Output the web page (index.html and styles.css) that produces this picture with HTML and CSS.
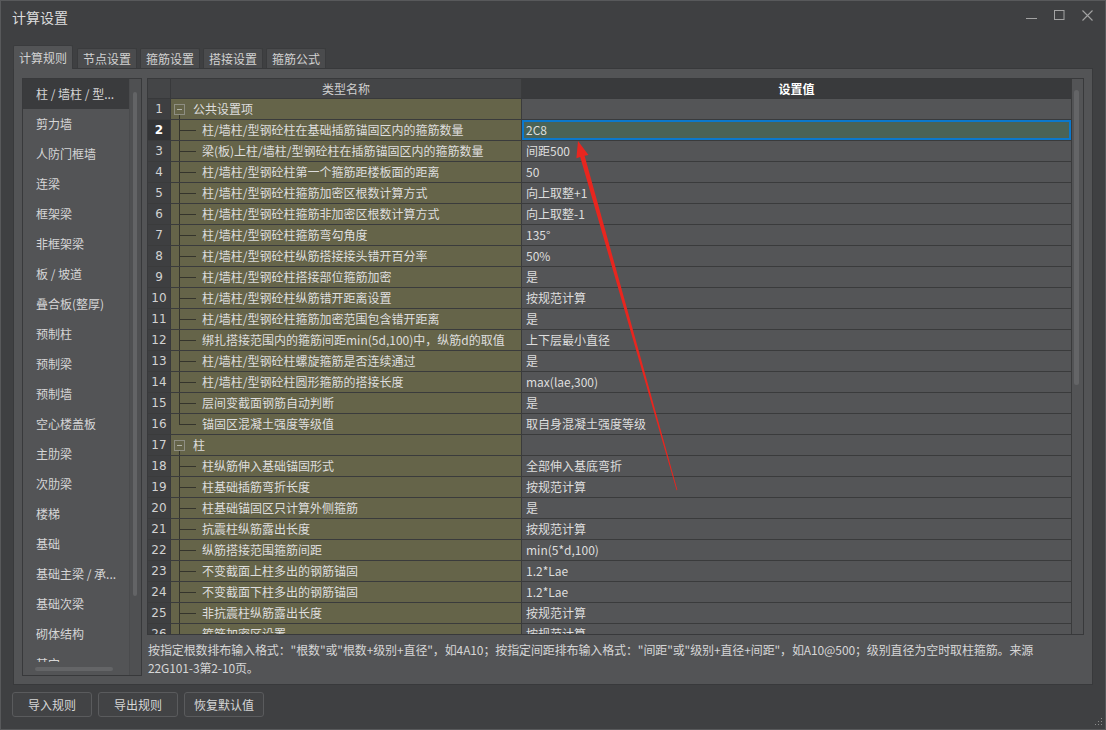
FILE: index.html
```html
<!DOCTYPE html>
<html>
<head>
<meta charset="utf-8">
<link rel="stylesheet" href="styles.css">
</head>
<body>
<div class="window">
  <div class="titlebar">
    <span class="title">计算设置</span>
    <div class="controls">
      <svg class="ctl" width="11" height="11" viewBox="0 0 11 11"><line x1="0" y1="8.5" x2="11" y2="8.5" stroke="#a3a3a3" stroke-width="1"/></svg>
      <svg class="ctl" width="11" height="11" viewBox="0 0 11 11"><rect x="0.5" y="0.5" width="9.5" height="9" fill="none" stroke="#a3a3a3" stroke-width="1"/></svg>
      <svg class="ctl" width="11" height="11" viewBox="0 0 11 11"><path d="M0.5 0.5 L10.5 10.5 M10.5 0.5 L0.5 10.5" stroke="#a3a3a3" stroke-width="1.1" fill="none"/></svg>
    </div>
  </div>

  <div class="tabs">
    <div class="tab active">计算规则</div>
    <div class="tab">节点设置</div>
    <div class="tab">箍筋设置</div>
    <div class="tab">搭接设置</div>
    <div class="tab">箍筋公式</div>
  </div>

  <div class="pane">
    <div class="list">
      <div class="list-view">
        <div class="list-items">
          <div class="item selected">柱 / 墙柱 / 型...</div>
          <div class="item">剪力墙</div>
          <div class="item">人防门框墙</div>
          <div class="item">连梁</div>
          <div class="item">框架梁</div>
          <div class="item">非框架梁</div>
          <div class="item">板 / 坡道</div>
          <div class="item">叠合板(整厚)</div>
          <div class="item">预制柱</div>
          <div class="item">预制梁</div>
          <div class="item">预制墙</div>
          <div class="item">空心楼盖板</div>
          <div class="item">主肋梁</div>
          <div class="item">次肋梁</div>
          <div class="item">楼梯</div>
          <div class="item">基础</div>
          <div class="item">基础主梁 / 承...</div>
          <div class="item">基础次梁</div>
          <div class="item">砌体结构</div>
          <div class="item">其它</div>
        </div>
        <div class="hscroll"><div class="hthumb"></div></div>
      </div>
      <div class="vscroll"><div class="vthumb"></div></div>
    </div>

    <div class="main">
      <div class="grid">
        <div class="grid-view">
          <div class="row head">
            <div class="num"></div>
            <div class="name">类型名称</div>
            <div class="val">设置值</div>
          </div>
          <div class="row group"><div class="num">1</div><div class="name"><span class="toggle"></span><span>公共设置项</span></div><div class="val"></div></div>
          <div class="row current"><div class="num">2</div><div class="name"><span class="branch"></span><span>柱/墙柱/型钢砼柱在基础插筋锚固区内的箍筋数量</span></div><div class="val editing">2C8</div></div>
          <div class="row"><div class="num">3</div><div class="name"><span class="branch"></span><span>梁(板)上柱/墙柱/型钢砼柱在插筋锚固区内的箍筋数量</span></div><div class="val">间距500</div></div>
          <div class="row"><div class="num">4</div><div class="name"><span class="branch"></span><span>柱/墙柱/型钢砼柱第一个箍筋距楼板面的距离</span></div><div class="val">50</div></div>
          <div class="row"><div class="num">5</div><div class="name"><span class="branch"></span><span>柱/墙柱/型钢砼柱箍筋加密区根数计算方式</span></div><div class="val">向上取整+1</div></div>
          <div class="row"><div class="num">6</div><div class="name"><span class="branch"></span><span>柱/墙柱/型钢砼柱箍筋非加密区根数计算方式</span></div><div class="val">向上取整-1</div></div>
          <div class="row"><div class="num">7</div><div class="name"><span class="branch"></span><span>柱/墙柱/型钢砼柱箍筋弯勾角度</span></div><div class="val">135°</div></div>
          <div class="row"><div class="num">8</div><div class="name"><span class="branch"></span><span>柱/墙柱/型钢砼柱纵筋搭接接头错开百分率</span></div><div class="val">50%</div></div>
          <div class="row"><div class="num">9</div><div class="name"><span class="branch"></span><span>柱/墙柱/型钢砼柱搭接部位箍筋加密</span></div><div class="val">是</div></div>
          <div class="row"><div class="num">10</div><div class="name"><span class="branch"></span><span>柱/墙柱/型钢砼柱纵筋错开距离设置</span></div><div class="val">按规范计算</div></div>
          <div class="row"><div class="num">11</div><div class="name"><span class="branch"></span><span>柱/墙柱/型钢砼柱箍筋加密范围包含错开距离</span></div><div class="val">是</div></div>
          <div class="row"><div class="num">12</div><div class="name"><span class="branch"></span><span>绑扎搭接范围内的箍筋间距min(5d,100)中，纵筋d的取值</span></div><div class="val">上下层最小直径</div></div>
          <div class="row"><div class="num">13</div><div class="name"><span class="branch"></span><span>柱/墙柱/型钢砼柱螺旋箍筋是否连续通过</span></div><div class="val">是</div></div>
          <div class="row"><div class="num">14</div><div class="name"><span class="branch"></span><span>柱/墙柱/型钢砼柱圆形箍筋的搭接长度</span></div><div class="val">max(lae,300)</div></div>
          <div class="row"><div class="num">15</div><div class="name"><span class="branch"></span><span>层间变截面钢筋自动判断</span></div><div class="val">是</div></div>
          <div class="row"><div class="num">16</div><div class="name"><span class="branch last"></span><span>锚固区混凝土强度等级值</span></div><div class="val">取自身混凝土强度等级</div></div>
          <div class="row group"><div class="num">17</div><div class="name"><span class="toggle"></span><span>柱</span></div><div class="val"></div></div>
          <div class="row"><div class="num">18</div><div class="name"><span class="branch"></span><span>柱纵筋伸入基础锚固形式</span></div><div class="val">全部伸入基底弯折</div></div>
          <div class="row"><div class="num">19</div><div class="name"><span class="branch"></span><span>柱基础插筋弯折长度</span></div><div class="val">按规范计算</div></div>
          <div class="row"><div class="num">20</div><div class="name"><span class="branch"></span><span>柱基础锚固区只计算外侧箍筋</span></div><div class="val">是</div></div>
          <div class="row"><div class="num">21</div><div class="name"><span class="branch"></span><span>抗震柱纵筋露出长度</span></div><div class="val">按规范计算</div></div>
          <div class="row"><div class="num">22</div><div class="name"><span class="branch"></span><span>纵筋搭接范围箍筋间距</span></div><div class="val">min(5*d,100)</div></div>
          <div class="row"><div class="num">23</div><div class="name"><span class="branch"></span><span>不变截面上柱多出的钢筋锚固</span></div><div class="val">1.2*Lae</div></div>
          <div class="row"><div class="num">24</div><div class="name"><span class="branch"></span><span>不变截面下柱多出的钢筋锚固</span></div><div class="val">1.2*Lae</div></div>
          <div class="row"><div class="num">25</div><div class="name"><span class="branch"></span><span>非抗震柱纵筋露出长度</span></div><div class="val">按规范计算</div></div>
          <div class="row"><div class="num">26</div><div class="name"><span class="branch"></span><span>箍筋加密区设置</span></div><div class="val">按规范计算</div></div>
        </div>
        <div class="gscroll"><div class="gthumb"></div></div>
      </div>
      <div class="desc">
        <div class="line">按指定根数排布输入格式："根数"或"根数+级别+直径"，如4A10；按指定间距排布输入格式："间距"或"级别+直径+间距"，如A10@500；级别直径为空时取柱箍筋。来源</div>
        <div class="line">22G101-3第2-10页。</div>
      </div>
    </div>
  </div>

  <div class="buttons">
    <div class="btn">导入规则</div>
    <div class="btn">导出规则</div>
    <div class="btn">恢复默认值</div>
  </div>
  <div class="footer-grip">
    <svg width="8" height="8" viewBox="0 0 8 8">
      <rect x="6" y="0" width="1" height="1" fill="#8a8a8a"/>
      <rect x="3" y="3" width="1" height="1" fill="#8a8a8a"/>
      <rect x="6" y="3" width="1" height="1" fill="#8a8a8a"/>
      <rect x="0" y="6" width="1" height="1" fill="#8a8a8a"/>
      <rect x="3" y="6" width="1" height="1" fill="#8a8a8a"/>
      <rect x="6" y="6" width="1" height="1" fill="#8a8a8a"/>
    </svg>
  </div>
</div>
<svg class="arrow" width="1106" height="730" viewBox="0 0 1106 730">
  <polygon points="578,141 588.5,155 584.6,155.8 677.4,490 676.6,490.2 580.2,157 576.4,158.2" fill="#e8261f"/>
</svg>
</body>
</html>
```

FILE: styles.css
```css
html, body {
  margin: 0;
  padding: 0;
}
body {
  width: 1106px;
  height: 730px;
  overflow: hidden;
  background: #3f4042;
  font-family: "Noto Sans CJK SC", "Microsoft YaHei", sans-serif;
  font-size: 12px;
  color: #d6d6d6;
  position: relative;
}
.window {
  width: 1106px;
  height: 730px;
  box-sizing: border-box;
  border: 1px solid #58595b;
  background: #3f4042;
  display: flex;
  flex-direction: column;
}
.titlebar {
  height: 31px;
  display: flex;
  align-items: center;
  padding: 0 12px 0 11px;
}
.title {
  font-size: 14px;
  line-height: 18px;
  color: #dcdcdc;
}
.controls {
  margin-left: auto;
  display: flex;
  gap: 17px;
  margin-top: -2px;
}
.ctl {
  display: block;
}
.tabs {
  margin-top: 13px;
  margin-left: 12px;
  height: 23px;
  display: flex;
  align-items: flex-end;
  position: relative;
  z-index: 2;
}
.tab {
  width: 60px;
  height: 20px;
  box-sizing: border-box;
  border: 1px solid #3a3b3d;
  border-bottom: none;
  border-radius: 2px 2px 0 0;
  background: #4a4b4d;
  margin-right: 3px;
  text-align: center;
  line-height: 20px;
  font-size: 12px;
  color: #d2d2d2;
}
.tab.active {
  height: 24px;
  margin-bottom: -1px;
  background: #535456;
  margin-right: 4px;
  line-height: 23px;
}
.pane {
  margin: 0 12px;
  height: 617px;
  box-sizing: border-box;
  border: 1px solid #38393b;
  background: #535456;
  padding: 9px 8px 8px 8px;
  display: flex;
  gap: 5px;
}
.list {
  width: 120px;
  height: 598px;
  box-sizing: border-box;
  border: 1px solid #38393b;
  background: #535456;
  display: flex;
}
.list-view {
  width: 106px;
  display: flex;
  flex-direction: column;
}
.list-items {
  height: 583px;
  overflow: hidden;
}
.item {
  height: 30px;
  line-height: 30px;
  padding-left: 13px;
  white-space: nowrap;
  color: #d6d6d6;
}
.item.selected {
  background: #3a3b3d;
}
.hscroll {
  height: 13px;
}
.hthumb {
  margin: 5px 0 0 12px;
  width: 78px;
  height: 4px;
  border-radius: 2px;
  background: #646567;
}
.vscroll {
  flex: 1;
  background: #4f5052;
  border-left: 1px solid #4a4b4d;
}
.vthumb {
  margin: 13px 0 0 3px;
  width: 4px;
  height: 504px;
  border-radius: 2px;
  background: #636466;
}
.main {
  width: 937px;
  display: flex;
  flex-direction: column;
}
.grid {
  height: 557px;
  box-sizing: border-box;
  border: 1px solid #38393b;
  display: flex;
}
.grid-view {
  width: 923px;
  overflow: hidden;
}
.row {
  display: flex;
  height: 21px;
  box-sizing: border-box;
  border-bottom: 1px solid #3a3b3c;
  line-height: 20px;
}
.row > div {
  box-sizing: border-box;
  white-space: nowrap;
  overflow: hidden;
}
.num {
  width: 23px;
  background: #3e3f41;
  border-right: 1px solid #38393b;
  text-align: center;
  font-family: "DejaVu Sans", "Noto Sans", sans-serif;
  font-size: 12px;
  color: #d2d2d2;
}
.name {
  width: 351px;
  background: #656449;
  border-right: 1px solid #3a3b3c;
  display: flex;
  align-items: center;
  color: #dedede;
}
.val {
  width: 549px;
  background: #545557;
  padding-left: 4px;
  color: #dedede;
}
.row.head {
  height: 20px;
  line-height: 19px;
  border-bottom: 1px solid #38393b;
}
.row.head .num {
  background: #444547;
}
.row.head .name {
  background: #444547;
  justify-content: center;
  color: #d0d0d0;
}
.row.head .val {
  background: #393a3c;
  text-align: center;
  padding-left: 0;
  font-weight: bold;
  color: #ffffff;
}
.row.current .num {
  background: #333436;
  color: #ffffff;
  font-weight: bold;
}
.val.editing {
  background: #4a6357;
  box-shadow: inset 0 0 0 2px #0b78cc;
}
.row.group .name {
  padding-left: 3px;
  background: #656449 linear-gradient(#34342c, #34342c) no-repeat 8px 100% / 1px 50%;
}
.toggle {
  width: 11px;
  height: 11px;
  box-sizing: border-box;
  border: 1px solid #8e8e82;
  background: #656449 linear-gradient(#b4b4aa, #b4b4aa) no-repeat center / 5px 1px;
  margin-right: 8px;
  flex: none;
}
.branch {
  width: 17px;
  align-self: stretch;
  margin-left: 8px;
  margin-right: 6px;
  flex: none;
  background:
    linear-gradient(#34342c, #34342c) no-repeat 0 0 / 1px 100%,
    linear-gradient(#34342c, #34342c) no-repeat 0 50% / 100% 1px;
}
.branch.last {
  background:
    linear-gradient(#34342c, #34342c) no-repeat 0 0 / 1px 50%,
    linear-gradient(#34342c, #34342c) no-repeat 0 50% / 100% 1px;
}
.gscroll {
  flex: 1;
  border-left: 1px solid #3a3b3c;
  background: #535456;
}
.gthumb {
  margin: 11px 0 0 2px;
  width: 5px;
  height: 295px;
  border-radius: 3px;
  background: #646567;
}
.desc {
  padding-top: 6px;
  padding-left: 1px;
  line-height: 18px;
  color: #d6d6d6;
  font-size: 12px;
}
.line {
  white-space: nowrap;
  letter-spacing: -0.12px;
}
.buttons {
  margin: 7px 0 0 11px;
  display: flex;
  gap: 6px;
}
.btn {
  width: 80px;
  height: 25px;
  box-sizing: border-box;
  border: 1px solid #5a5b5d;
  border-radius: 3px;
  background: #424345;
  text-align: center;
  line-height: 23px;
  color: #d6d6d6;
}
.footer-grip {
  margin-top: auto;
  align-self: flex-end;
  padding: 0 2px 3px 0;
  line-height: 0;
}
.arrow {
  position: absolute;
  left: 0;
  top: 0;
  pointer-events: none;
}
```
